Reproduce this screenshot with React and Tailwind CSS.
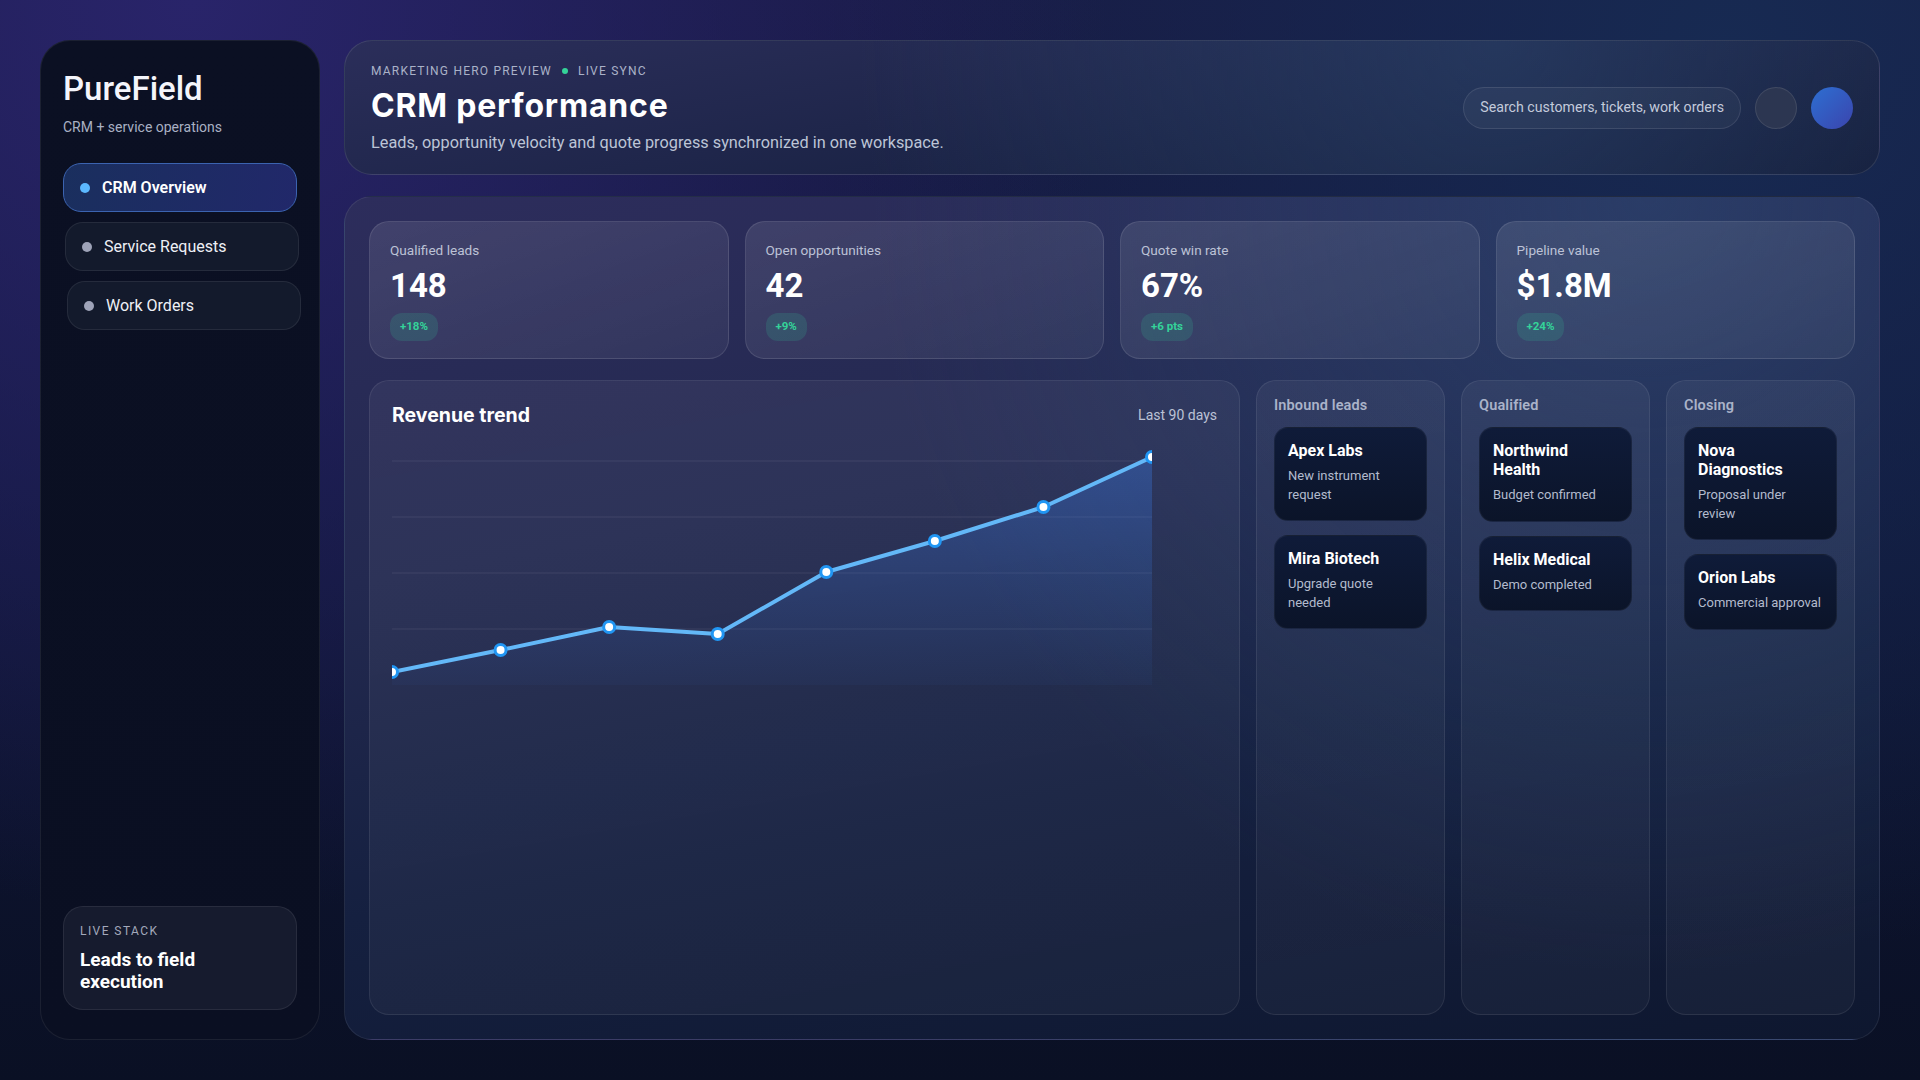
import React from 'react';

const nav = [
  { label: 'CRM Overview', active: true, shift: '' },
  { label: 'Service Requests', active: false, shift: 'translate-x-[2px]' },
  { label: 'Work Orders', active: false, shift: 'translate-x-[4px]' },
];

const kpis = [
  { label: 'Qualified leads', value: '148', delta: '+18%' },
  { label: 'Open opportunities', value: '42', delta: '+9%' },
  { label: 'Quote win rate', value: '67%', delta: '+6 pts' },
  { label: 'Pipeline value', value: '$1.8M', delta: '+24%' },
];

const columns = [
  {
    title: 'Inbound leads',
    cards: [
      { name: 'Apex Labs', note: 'New instrument request' },
      { name: 'Mira Biotech', note: 'Upgrade quote needed' },
    ],
  },
  {
    title: 'Qualified',
    cards: [
      { name: 'Northwind Health', note: 'Budget confirmed' },
      { name: 'Helix Medical', note: 'Demo completed' },
    ],
  },
  {
    title: 'Closing',
    cards: [
      { name: 'Nova Diagnostics', note: 'Proposal under review' },
      { name: 'Orion Labs', note: 'Commercial approval' },
    ],
  },
];

// revenue points, y in svg space (760 x 240)
const points = [227, 205, 182, 189, 127, 96, 62, 12];

function RevenueChart() {
  const w = 760;
  const h = 240;
  const step = w / (points.length - 1);
  const coords = points.map((y, i) => [i * step, y]);
  const line = coords.map(([x, y]) => `${x},${y}`).join(' ');
  const area = `M0,${h} L${coords.map(([x, y]) => `${x},${y}`).join(' L')} L${w},${h} Z`;

  return (
    <svg width={w} height={h} viewBox={`0 0 ${w} ${h}`} className="block">
      <defs>
        <linearGradient id="rev-fill" x1="0" y1="0" x2="0" y2="1">
          <stop offset="0%" stopColor="#3b82f6" stopOpacity="0.32" />
          <stop offset="100%" stopColor="#3b82f6" stopOpacity="0.04" />
        </linearGradient>
      </defs>
      {[16, 72, 128, 184].map((y) => (
        <line key={y} x1="0" x2={w} y1={y} y2={y} stroke="rgba(255,255,255,0.06)" strokeWidth="1.5" />
      ))}
      <path d={area} fill="url(#rev-fill)" />
      <polyline points={line} fill="none" stroke="#63b8f8" strokeWidth="4" strokeLinejoin="round" strokeLinecap="round" />
      {coords.map(([x, y], i) => (
        <circle key={i} cx={x} cy={y} r="5.5" fill="#ffffff" stroke="#2196f3" strokeWidth="3" />
      ))}
    </svg>
  );
}

export default function App() {
  return (
    <div className="h-screen w-full p-10 flex gap-6 font-['Roboto',sans-serif] text-white bg-[radial-gradient(circle_at_10%_0%,#29246a_0%,transparent_45%),radial-gradient(circle_at_90%_5%,#172a52_0%,transparent_45%),linear-gradient(180deg,#181a44_0%,#10173a_45%,#0a1024_100%)]">
      {/* Sidebar */}
      <aside className="w-[280px] flex-shrink-0 flex flex-col rounded-[30px] border border-white/[0.07] bg-[linear-gradient(180deg,#0b1023_0%,#0a0f22_100%)] px-[22px] pt-[28px] pb-[29px]">
        <h1 className="text-[33px] leading-[40px] font-medium text-[#f4f5fb]">PureField</h1>
        <p className="mt-2 text-[14px] leading-5 text-[#a9b0c3]">CRM + service operations</p>

        <nav className="mt-[26px] flex flex-col gap-2.5">
          {nav.map((item) => (
            <div
              key={item.label}
              className={`${item.shift} h-[49px] flex items-center gap-3 pl-4 rounded-[18px] border ${
                item.active
                  ? 'border-[#3b63b0] bg-[linear-gradient(100deg,#1a2f5e_0%,#21286a_100%)]'
                  : 'border-white/[0.08] bg-[#131a2c]'
              }`}
            >
              <span className={`w-2.5 h-2.5 rounded-full ${item.active ? 'bg-[#5cb8ff]' : 'bg-[#9ea3b8]'}`} />
              <span className={`text-[16px] ${item.active ? 'font-semibold text-white' : 'text-[#eef0f6]'}`}>
                {item.label}
              </span>
            </div>
          ))}
        </nav>

        <div className="mt-auto rounded-[20px] border border-white/[0.08] bg-[#161b2e] p-4">
          <p className="text-[12px] leading-4 tracking-[0.12em] text-[#a3a9bb]">LIVE STACK</p>
          <p className="mt-2.5 max-w-[180px] text-[19px] leading-[22px] font-bold text-white">
            Leads to field execution
          </p>
        </div>
      </aside>

      {/* Main */}
      <main className="flex-1 min-w-0 flex flex-col gap-[21px]">
        {/* Header */}
        <header className="h-[135px] flex-shrink-0 flex items-center justify-between rounded-[28px] border border-white/[0.1] px-[26px] bg-[radial-gradient(circle_at_75%_0%,rgba(44,70,110,0.55)_0%,transparent_55%),linear-gradient(170deg,#2b2e5a_0%,#1c2447_55%,#121a36_100%)]">
          <div>
            <div className="flex items-center gap-2.5 text-[12px] leading-4 tracking-[0.1em] text-[#aab2c8]">
              <span>MARKETING HERO PREVIEW</span>
              <span className="w-1.5 h-1.5 rounded-full bg-[#34d399]" />
              <span>LIVE SYNC</span>
            </div>
            <h2 className="mt-2 font-['Inter',sans-serif] text-[32px] leading-[38px] font-bold tracking-[0.025em] text-white">
              CRM performance
            </h2>
            <p className="mt-2 text-[16.3px] leading-5 text-[#bcc4d6]">
              Leads, opportunity velocity and quote progress synchronized in one workspace.
            </p>
          </div>
          <div className="flex items-center gap-3.5">
            <div className="h-[42px] flex items-center px-4 rounded-full border border-white/[0.1] bg-white/[0.04] text-[14.2px] text-[#c3cadb]">
              Search customers, tickets, work orders
            </div>
            <div className="w-[42px] h-[42px] rounded-full border border-white/[0.1] bg-[#2c3651]" />
            <div className="w-[42px] h-[42px] rounded-full bg-[linear-gradient(135deg,#2d6fd2_0%,#3b44ad_100%)]" />
          </div>
        </header>

        {/* Panel */}
        <section className="flex-1 min-h-0 flex flex-col gap-[21px] rounded-[28px] border border-white/[0.08] p-6 bg-[radial-gradient(circle_at_85%_0%,rgba(44,72,115,0.6)_0%,transparent_50%),linear-gradient(170deg,#2d2d5c_0%,#232950_35%,#152040_65%,#0e172f_100%)]">
          {/* KPI cards */}
          <div className="grid grid-cols-4 gap-4">
            {kpis.map((k) => (
              <div
                key={k.label}
                className="h-[138px] rounded-[20px] border border-white/[0.1] bg-[linear-gradient(160deg,rgba(255,255,255,0.1)_0%,rgba(255,255,255,0.05)_100%)] px-5 pt-5"
              >
                <p className="text-[13.6px] leading-4 text-[#bcc2d6]">{k.label}</p>
                <p className="mt-2.5 text-[33px] leading-9 font-bold text-white">{k.value}</p>
                <span className="mt-[9px] inline-flex h-7 items-center px-[10px] rounded-[12px] bg-[#34d399]/[0.16] text-[11.5px] font-bold text-[#34d399]">
                  {k.delta}
                </span>
              </div>
            ))}
          </div>

          {/* Lower row */}
          <div className="flex-1 min-h-0 grid grid-cols-[minmax(0,1fr)_189px_189px_189px] gap-4">
            <div className="rounded-[20px] border border-white/[0.08] bg-[linear-gradient(170deg,rgba(255,255,255,0.05)_0%,rgba(255,255,255,0.035)_100%)] p-[22px]">
              <div className="flex items-center justify-between">
                <h3 className="font-['Inter',sans-serif] text-[19.5px] leading-6 font-bold text-white">Revenue trend</h3>
                <span className="text-[14px] text-[#bcc2d6]">Last 90 days</span>
              </div>
              <div className="mt-[18px]">
                <RevenueChart />
              </div>
            </div>

            {columns.map((col) => (
              <div
                key={col.title}
                className="rounded-[20px] border border-white/[0.08] bg-[linear-gradient(170deg,rgba(255,255,255,0.05)_0%,rgba(255,255,255,0.035)_100%)] px-[17px] pt-4"
              >
                <p className="text-[14.5px] leading-[18px] font-semibold tracking-[0.01em] text-[#aab3c9]">{col.title}</p>
                <div className="mt-3 flex flex-col gap-[14px]">
                  {col.cards.map((c) => (
                    <div
                      key={c.name}
                      className="rounded-[14px] border border-white/[0.05] bg-[linear-gradient(180deg,#0f1b39_0%,#0b1429_100%)] px-[13px] pt-[13px] pb-4"
                    >
                      <p className="max-w-[112px] text-[16px] leading-[19px] font-bold text-white">{c.name}</p>
                      <p className="mt-[7px] text-[13px] leading-[18.5px] text-[#b3bbcd]">{c.note}</p>
                    </div>
                  ))}
                </div>
              </div>
            ))}
          </div>
        </section>
      </main>
    </div>
  );
}
